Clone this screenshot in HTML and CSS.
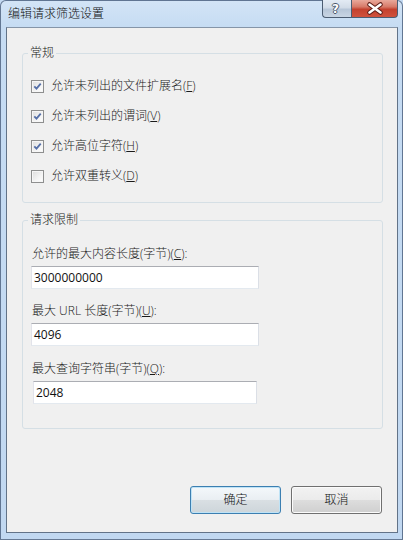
FILE: index.html
```html
<!DOCTYPE html>
<html lang="zh-CN">
<head>
<meta charset="utf-8">
<title>编辑请求筛选设置</title>
<link rel="stylesheet" href="styles.css">
</head>
<body>
<div class="window">
  <div class="titlebar">
    <span class="title">编辑请求筛选设置</span>
    <div class="caption-buttons">
      <div class="cap-btn help"><span>?</span></div>
      <div class="cap-btn close">
        <svg width="46" height="17" viewBox="0 0 46 17">
          <path d="M17.5 4.5 L28.5 12.5 M28.5 4.5 L17.5 12.5" stroke="#5a1a14" stroke-width="4.6" stroke-linecap="round" fill="none"/>
          <path d="M17.5 4.5 L28.5 12.5 M28.5 4.5 L17.5 12.5" stroke="#ffffff" stroke-width="2.6" stroke-linecap="round" fill="none"/>
        </svg>
      </div>
    </div>
  </div>
  <div class="client">
    <fieldset class="group group-general">
      <legend>常规</legend>
      <div class="check-row">
        <span class="checkbox"><svg width="13" height="13" viewBox="0 0 13 13"><path d="M3.3 6.3 L5.5 8.7 L9.7 3.7" stroke="#5670a8" stroke-width="1.8" fill="none"/></svg></span>
        <span class="check-label">允许未列出的文件扩展名(<u>F</u>)</span>
      </div>
      <div class="check-row">
        <span class="checkbox"><svg width="13" height="13" viewBox="0 0 13 13"><path d="M3.3 6.3 L5.5 8.7 L9.7 3.7" stroke="#5670a8" stroke-width="1.8" fill="none"/></svg></span>
        <span class="check-label">允许未列出的谓词(<u>V</u>)</span>
      </div>
      <div class="check-row">
        <span class="checkbox"><svg width="13" height="13" viewBox="0 0 13 13"><path d="M3.3 6.3 L5.5 8.7 L9.7 3.7" stroke="#5670a8" stroke-width="1.8" fill="none"/></svg></span>
        <span class="check-label">允许高位字符(<u>H</u>)</span>
      </div>
      <div class="check-row">
        <span class="checkbox"></span>
        <span class="check-label">允许双重转义(<u>D</u>)</span>
      </div>
    </fieldset>
    <fieldset class="group group-limits">
      <legend>请求限制</legend>
      <div class="field">
        <div class="field-label">允许的最大内容长度(字节)(<u>C</u>):</div>
        <div class="textbox">3000000000</div>
      </div>
      <div class="field">
        <div class="field-label">最大 URL 长度(字节)(<u>U</u>):</div>
        <div class="textbox">4096</div>
      </div>
      <div class="field field-last">
        <div class="field-label">最大查询字符串(字节)(<u>Q</u>):</div>
        <div class="textbox textbox-narrow">2048</div>
      </div>
    </fieldset>
    <div class="buttons">
      <div class="btn btn-default">确定</div>
      <div class="btn">取消</div>
    </div>
  </div>
</div>
</body>
</html>
```
FILE: styles.css
```css
html, body {
  margin: 0;
  padding: 0;
  background: #c4daf2;
}
body {
  font-family: "Open Sans", "Noto Sans CJK SC", sans-serif;
  font-size: 12px;
  font-weight: 300;
  color: #1a1a1a;
}
.window {
  box-sizing: border-box;
  width: 403px;
  height: 540px;
  border: 1px solid rgba(45, 65, 95, 0.65);
  border-radius: 6px 6px 0 0;
  padding: 0 4px 6px 5px;
  background: linear-gradient(to bottom, #d3e4f6 0px, #c6dcf3 26px, #c1d8f1 100%);
  display: flex;
  flex-direction: column;
}
.titlebar {
  height: 26px;
  display: flex;
  align-items: center;
  justify-content: space-between;
}
.title {
  padding-left: 2px;
  line-height: 16px;
  color: #111;
}
.caption-buttons {
  align-self: flex-start;
  margin-top: -1px;
  display: flex;
}
.cap-btn {
  box-sizing: border-box;
  height: 18px;
  border: 1px solid #4c5d72;
  border-top: none;
}
.help {
  width: 29px;
  border-right: none;
  border-radius: 0 0 0 4px;
  background: linear-gradient(to bottom, #e3ebf4 0%, #d2dce8 45%, #b7c6d8 55%, #c9d6e4 100%);
  display: flex;
  align-items: center;
  justify-content: center;
}
.help span {
  font-family: "DejaVu Sans", sans-serif;
  font-weight: bold;
  font-size: 12px;
  line-height: 14px;
  color: #fff;
  text-shadow: -1px 0 #4b5a6c, 1px 0 #4b5a6c, 0 -1px #4b5a6c, 0 1px #4b5a6c;
  margin-left: -3px;
}
.close {
  width: 47px;
  border-radius: 0 0 4px 0;
  background: linear-gradient(to bottom, #e9a99b 0%, #d77a68 40%, #c4412e 55%, #d0523d 100%);
}
.close svg {
  display: block;
}
.client {
  flex: 1;
  background: #f0f0f0;
  border: 1px solid #627388;
  border-top-color: #8595a8;
  display: flex;
  flex-direction: column;
}
.group {
  border: 1px solid #d5dfe5;
  border-radius: 3px;
  min-inline-size: 0;
  margin: 0 14px 0 15px;
}
.group legend {
  padding: 0 2px;
  margin-left: -3px;
  line-height: 16px;
  color: #1a1a1a;
}
.group-general {
  margin-top: 17px;
  padding: 10px 8px 11px 8px;
}
.group-limits {
  margin-top: 9px;
  padding: 18px 8px 24px 8px;
}
.check-row {
  height: 30px;
  display: flex;
  align-items: center;
}
.checkbox {
  box-sizing: border-box;
  width: 13px;
  height: 13px;
  border: 1px solid #8e8f8f;
  background: linear-gradient(135deg, #dcdcdc 0%, #f4f4f4 60%, #ffffff 100%);
  box-shadow: inset 0 0 0 1px #f6f6f6;
  position: relative;
  flex: none;
}
.checkbox svg {
  position: absolute;
  left: -1px;
  top: -1px;
}
.check-label {
  margin-left: 7px;
  line-height: 16px;
}
.field {
  margin-bottom: 14px;
}
.field-last {
  margin-bottom: 0;
  margin-top: 15px;
}
.field-label {
  line-height: 16px;
  padding-left: 1px;
}
.textbox {
  box-sizing: border-box;
  margin-top: 4px;
  width: 228px;
  height: 23px;
  border: 1px solid;
  border-color: #abadb3 #dbdfe6 #e3e9ef #e2e3ea;
  background: #fff;
  padding-left: 2px;
  line-height: 21px;
  font-weight: 400;
  color: #111;
}
.textbox-narrow {
  margin-left: 2px;
  width: 224px;
}
.buttons {
  margin-top: auto;
  margin-bottom: 18px;
  margin-right: 15px;
  display: flex;
  justify-content: flex-end;
  gap: 10px;
}
.btn {
  box-sizing: border-box;
  width: 91px;
  height: 28px;
  border: 1px solid #707070;
  border-radius: 3px;
  background: linear-gradient(to bottom, #f2f2f2 0%, #ebebeb 50%, #dddddd 51%, #cfcfcf 100%);
  box-shadow: inset 0 0 0 1px #fbfbfb;
  display: flex;
  align-items: center;
  justify-content: center;
  line-height: 16px;
  color: #111;
}
.btn-default {
  border-color: #3c7fb1;
  box-shadow: inset 0 0 0 1px #bfe3f6;
  background: linear-gradient(to bottom, #f4f8fb 0%, #e9eef2 50%, #d9dfe3 51%, #cdd5da 100%);
}
```
